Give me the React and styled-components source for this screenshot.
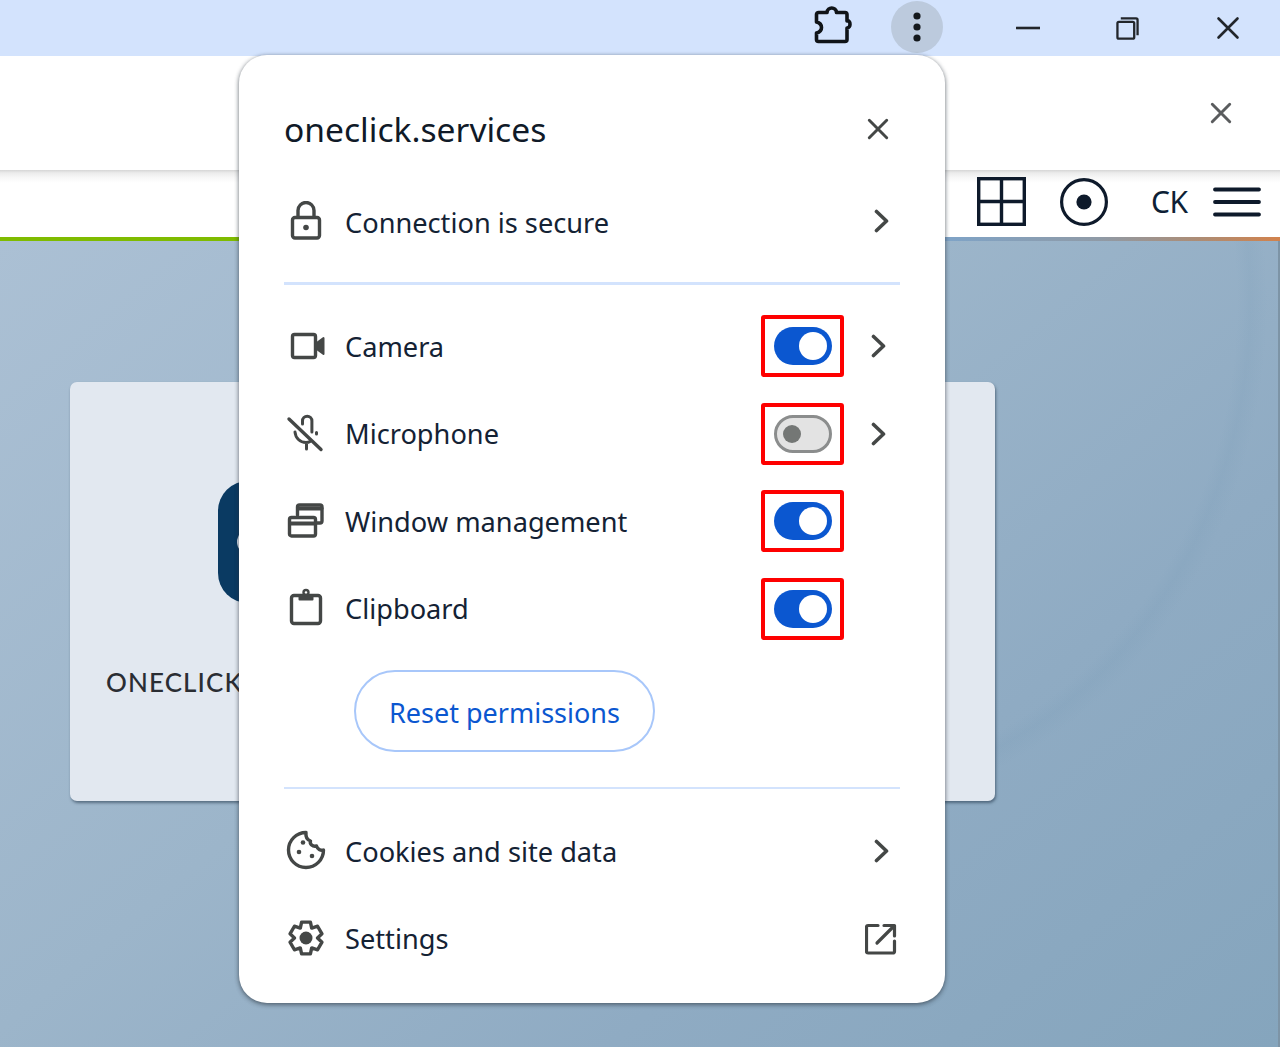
import React from "react";
import styled, { createGlobalStyle } from "styled-components";

const Global = createGlobalStyle`
  html, body { margin: 0; padding: 0; }
  body { font-family: "Noto Sans", "Open Sans", sans-serif; background: #8fabc3; overflow: hidden; }
  * { box-sizing: border-box; }
`;

const Page = styled.div`
  position: relative;
  width: 1280px;
  height: 1047px;
  overflow: hidden;
  display: flex;
  flex-direction: column;
`;

const TitleBar = styled.header`
  height: 56px;
  background: #d3e3fd;
  display: flex;
  align-items: flex-start;
  padding: 1px 2px 0 806px;
`;
const Extension = styled.div`
  width: 52px;
  height: 52px;
  padding: 0 0 4px 1px;
  display: flex;
  align-items: center;
  justify-content: center;
  margin-right: 33px;
`;
const MenuButton = styled.div`
  width: 52px;
  height: 52px;
  border-radius: 50%;
  background: #bccadd;
  display: flex;
  align-items: center;
  justify-content: center;
  margin-right: 35px;
`;
const WinButton = styled.div`
  width: 100px;
  height: 54px;
  display: flex;
  align-items: center;
  justify-content: center;
`;
const RestoreSlot = styled(WinButton)`
  padding-right: 2px;
`;

const TabBar = styled.div`
  height: 114px;
  background: #fff;
  display: flex;
  align-items: flex-end;
  justify-content: flex-end;
  padding: 0 48px 46px 0;
`;
const Toolbar = styled.div`
  height: 67px;
  background: linear-gradient(#d6d6d6 0, #ececec 3px, #f8f8f8 8px, #fff 13px);
  display: flex;
  align-items: center;
  justify-content: flex-end;
  padding: 0 19px 4px 0;
`;
const ToolSlot = styled.div`
  display: flex;
  align-items: center;
  margin-left: ${(p) => p.$gap}px;
`;
const Initials = styled.span`
  font-size: 30px;
  line-height: 34px;
  color: #0e1f36;
  width: 38px;
  white-space: nowrap;
  letter-spacing: -0.5px;
`;
const Progress = styled.div`
  height: 4px;
  background: linear-gradient(90deg, #7fbb00 0 240px, #7fa3c6 950px, #8f9aa6 1100px, #ad8c74 1200px, #d2824c 1280px);
`;

const Content = styled.main`
  flex: 1;
  padding: 141px 0 0 70px;
  border-right: 2px solid #7d94a6;
  background:
    radial-gradient(ellipse 430px 490px at 820px 60px, transparent 97%, rgba(100, 140, 170, 0.09) 100%, transparent 104%),
    linear-gradient(140deg, #abc0d4 0%, #9cb5ca 42%, #8fabc3 70%, #85a5bd 100%);
`;
const Card = styled.section`
  position: relative;
  width: 925px;
  height: 419px;
  background: #e2e8f0;
  border-radius: 7px;
  box-shadow: 1px 2px 3px rgba(30, 50, 70, 0.55);
  padding: 99px 0 0 36px;
  display: flex;
  flex-direction: column;
  align-items: flex-start;
`;
const Logo = styled.div`
  position: relative;
  width: 122px;
  height: 122px;
  margin-left: 112px;
  border-radius: 30px;
  background: #0a3a62;
  &::after {
    content: "";
    position: absolute;
    left: 19px;
    top: 49px;
    width: 24px;
    height: 24px;
    border-radius: 50%;
    background: #e2e8f0;
  }
`;
const CardName = styled.div`
  font-family: Lato, "Noto Sans", sans-serif;
  font-size: 26px;
  line-height: 32px;
  margin-top: 63px;
  letter-spacing: 1.1px;
  color: #2a2d33;
  font-weight: 500;
`;

const Popup = styled.aside`
  position: absolute;
  left: 239px;
  top: 55px;
  width: 706px;
  height: 948px;
  background: #fff;
  border-radius: 28px;
  box-shadow: 0 1px 4px rgba(40, 50, 60, 0.55), 0 2px 5px rgba(40, 50, 60, 0.25);
  padding: 0 45px;
  display: flex;
  flex-direction: column;
`;
const Header = styled.div`
  height: 124px;
  padding-top: 24px;
  display: flex;
  align-items: center;
  justify-content: space-between;
`;
const Title = styled.h1`
  margin: 0;
  font-size: 33.6px;
  font-weight: 400;
  color: #101a28;
`;
const CloseSlot = styled.div`
  width: 44px;
  display: flex;
  justify-content: center;
`;
const Row = styled.div`
  height: 87.5px;
  display: flex;
  align-items: center;
`;
const IconBox = styled.div`
  width: 44px;
  height: 44px;
  flex: none;
  margin-right: 17px;
`;
const Label = styled.span`
  flex: 1;
  font-size: 27.2px;
  color: #142234;
  white-space: nowrap;
`;
const Divider = styled.hr`
  margin: ${(p) => p.$top}px 0 ${(p) => p.$bottom}px;
  border: 0;
  height: ${(p) => p.$h}px;
  background: #d3e3fd;
`;
const Marked = styled.div`
  width: 83px;
  height: 62px;
  border: 4px solid #fe0000;
  border-radius: 3px;
  display: flex;
  align-items: center;
  justify-content: center;
  margin-right: 12px;
`;
const Toggle = styled.div`
  width: 58px;
  height: 38px;
  border-radius: 19px;
  background: ${(p) => (p.$on ? "#0b57d0" : "#e3e3e3")};
  border: ${(p) => (p.$on ? "0" : "3px solid #8b8d8d")};
  display: flex;
  align-items: center;
  justify-content: ${(p) => (p.$on ? "flex-end" : "flex-start")};
  padding: ${(p) => (p.$on ? "0 5px" : "0 6px")};
`;
const Thumb = styled.span`
  display: block;
  width: ${(p) => (p.$on ? 28 : 18)}px;
  height: ${(p) => (p.$on ? 28 : 18)}px;
  border-radius: 50%;
  background: ${(p) => (p.$on ? "#fff" : "#747775")};
`;
const Trailing = styled.div`
  width: 44px;
  flex: none;
  display: flex;
  justify-content: center;
  padding-left: ${(p) => (p.$shift ? 6 : 0)}px;
  padding-bottom: ${(p) => p.$lift || 0}px;
`;
const ResetButton = styled.button`
  align-self: flex-start;
  margin: 17px 0 0 70px;
  width: 301px;
  height: 82px;
  border-radius: 41px;
  border: 2px solid #a8c7fa;
  background: #fff;
  color: #0b57d0;
  font-family: inherit;
  font-size: 27px;
  padding: 4px 0 0;
`;

const ink = "#444746";

const Chevron = () => (
  <svg width="15" height="24" viewBox="0 0 15 24" fill="none" stroke={ink} strokeWidth="3.6" strokeLinecap="round" strokeLinejoin="round">
    <path d="M2.5 2.5 L12.5 12 L2.5 21.5" />
  </svg>
);
const Cross = ({ size = 24, color = ink, weight = 3.2 }) => (
  <svg width={size} height={size} viewBox="0 0 24 24" fill="none" stroke={color} strokeWidth={weight} strokeLinecap="round">
    <path d="M2.5 2.5 L21.5 21.5 M21.5 2.5 L2.5 21.5" />
  </svg>
);
const Glyph = ({ children, ...rest }) => (
  <svg width="44" height="44" viewBox="0 0 44 44" fill="none" stroke={ink} strokeWidth="3.4" strokeLinecap="round" strokeLinejoin="round" {...rest}>
    {children}
  </svg>
);

const gearPath = (() => {
  const pts = [];
  const teeth = 6;
  for (let i = 0; i < teeth; i++) {
    const a = (i / teeth) * Math.PI * 2 - Math.PI / 2;
    const w = 0.27;
    const gapR = 11.5;
    const toothR = 16.5;
    pts.push([a - 0.52, gapR], [a - w, toothR], [a + w, toothR], [a + 0.52, gapR]);
  }
  return (
    pts
      .map(([a, r], i) => `${i ? "L" : "M"}${(22 + r * Math.cos(a)).toFixed(2)} ${(21 + r * Math.sin(a)).toFixed(2)}`)
      .join(" ") + " Z"
  );
})();

const LockIcon = () => (
  <Glyph>
    <rect x="8.5" y="16.5" width="27" height="20.5" rx="2.5" />
    <path d="M14 16 V9.5 a8 8 0 0 1 16 0 V16" />
    <circle cx="22" cy="26.5" r="2.8" fill={ink} stroke="none" />
  </Glyph>
);
const CameraIcon = () => (
  <Glyph>
    <rect x="8.5" y="10.5" width="23" height="23" rx="2" />
    <path d="M32 19.5 L39.5 14 V30 L32 24.5 Z" fill={ink} strokeWidth="2" />
  </Glyph>
);
const MicOffIcon = () => (
  <Glyph>
    <path d="M5 7 L37 37.5" />
    <path d="M18.5 12 V9 a4.7 4.7 0 0 1 9.4 0 V20" strokeWidth="3" />
    <path d="M11 20 c.5 6 5 10.5 11 10.5 c1.5 0 3 -.3 4 -1 M32.5 22 V20.5 M22.5 31 V37" strokeWidth="3" />
  </Glyph>
);
const WindowsIcon = () => (
  <Glyph>
    <rect x="5.5" y="18.5" width="26" height="18.5" rx="2" />
    <path d="M6 24.5 H31" strokeWidth="4" />
    <path d="M13.5 16 V8 a2 2 0 0 1 2 -2 H36 a2 2 0 0 1 2 2 V22 a2 2 0 0 1 -2 2 H33" />
    <path d="M14 9.5 H37.5" strokeWidth="4" />
  </Glyph>
);
const ClipboardIcon = () => (
  <Glyph>
    <rect x="7.5" y="8.5" width="29" height="28" rx="2.5" />
    <path d="M15.5 9 H28.5 V12.5 H15.5 Z" fill={ink} strokeWidth="2" />
    <circle cx="22" cy="5.5" r="2.5" strokeWidth="2.4" />
  </Glyph>
);
const CookieIcon = () => (
  <Glyph>
    <path d="M22 3.5 A17.5 17.5 0 1 0 39.5 21 C36.5 22 33.5 20 32.5 17 C28.5 18 25.5 15 26.5 12 C23.5 11 21.5 8 22 3.5 Z" />
    <circle cx="19" cy="13.5" r="2.3" fill={ink} stroke="none" />
    <circle cx="15" cy="23" r="2.3" fill={ink} stroke="none" />
    <circle cx="28" cy="27" r="2.3" fill={ink} stroke="none" />
  </Glyph>
);
const GearIcon = () => (
  <Glyph>
    <path d={gearPath} strokeWidth="3.4" />
    <circle cx="22" cy="21" r="6.5" fill={ink} stroke="none" />
  </Glyph>
);
const ExternalIcon = () => (
  <svg width="32" height="32" viewBox="0 0 32 32" fill="none" stroke={ink} strokeWidth="3.2" strokeLinecap="round" strokeLinejoin="round">
    <path d="M13 2.5 H3 a1.5 1.5 0 0 0 -1.5 1.5 V28.5 a1.5 1.5 0 0 0 1.5 1.5 H28 a1.5 1.5 0 0 0 1.5 -1.5 V18" />
    <path d="M19 2.5 H29.5 V13 M29 3 L12 20" />
  </svg>
);

const PuzzleIcon = () => (
  <svg width="38" height="38" viewBox="0 0 38 38" fill="none" stroke="#101418" strokeWidth="3.6" strokeLinejoin="round">
    <path d="M2.5 8.5 a2 2 0 0 1 2 -2 H13 c.5 -6 9 -6 9.5 0 H31 a2 2 0 0 1 2 2 V15 c4 -1 4 7 0 7 V33.5 a2 2 0 0 1 -2 2 H4.5 a2 2 0 0 1 -2 -2 V27 c4 -1 5 -3 5 -5.5 s-1 -4.5 -5 -5.5 Z" />
  </svg>
);
const KebabIcon = () => (
  <svg width="10" height="32" viewBox="0 0 10 32" fill="#14181c">
    <circle cx="5" cy="5" r="3.6" />
    <circle cx="5" cy="16" r="3.6" />
    <circle cx="5" cy="27" r="3.6" />
  </svg>
);
const MinimizeIcon = () => (
  <svg width="24" height="6" viewBox="0 0 24 6">
    <path d="M0 3 H24" stroke="#22262b" strokeWidth="2.6" />
  </svg>
);
const RestoreIcon = () => (
  <svg width="23" height="23" viewBox="0 0 24 24" fill="none" stroke="#22262b" strokeWidth="2.4">
    <rect x="1.5" y="5" width="17.5" height="17.5" rx="1.5" />
    <path d="M5 1.5 H21 a1.5 1.5 0 0 1 1.5 1.5 V19" />
  </svg>
);
const GridIcon = () => (
  <svg width="49" height="49" viewBox="0 0 49 49" fill="none" stroke="#0e1a2b" strokeWidth="3.4">
    <rect x="1.7" y="1.7" width="45.6" height="45.6" />
    <path d="M24.5 2 V47 M2 24.5 H47" />
  </svg>
);
const TargetIcon = () => (
  <svg width="48" height="48" viewBox="0 0 48 48" fill="none" stroke="#0e1a2b" strokeWidth="3.2">
    <circle cx="24" cy="24" r="22.4" />
    <circle cx="24" cy="24" r="7.6" fill="#0e1a2b" stroke="none" />
  </svg>
);
const MenuLines = () => (
  <svg width="48" height="30" viewBox="0 0 48 30" stroke="#0e1a2b" strokeWidth="3.8" strokeLinecap="round">
    <path d="M2 2.5 H46 M2 15 H46 M2 27.5 H46" />
  </svg>
);

const sitePermissions = [
  { icon: CameraIcon, label: "Camera", on: true, more: true },
  { icon: MicOffIcon, label: "Microphone", on: false, more: true },
  { icon: WindowsIcon, label: "Window management", on: true },
  { icon: ClipboardIcon, label: "Clipboard", on: true },
];

export default function App() {
  return (
    <Page>
      <Global />
      <TitleBar>
        <Extension><PuzzleIcon /></Extension>
        <MenuButton><KebabIcon /></MenuButton>
        <WinButton><MinimizeIcon /></WinButton>
        <RestoreSlot><RestoreIcon /></RestoreSlot>
        <WinButton><Cross size={24} color="#22262b" weight={2.6} /></WinButton>
      </TitleBar>
      <TabBar><Cross size={22} color="#5a5c5e" /></TabBar>
      <Toolbar>
        <ToolSlot $gap={0}><GridIcon /></ToolSlot>
        <ToolSlot $gap={34}><TargetIcon /></ToolSlot>
        <ToolSlot $gap={43}><Initials>CK</Initials></ToolSlot>
        <ToolSlot $gap={24}><MenuLines /></ToolSlot>
      </Toolbar>
      <Progress />
      <Content>
        <Card>
          <Logo />
          <CardName>ONECLICK</CardName>
        </Card>
      </Content>
      <Popup>
        <Header>
          <Title>oneclick.services</Title>
          <CloseSlot><Cross size={22} /></CloseSlot>
        </Header>
        <Row>
          <IconBox><LockIcon /></IconBox>
          <Label>Connection is secure</Label>
          <Trailing $shift $lift={4}><Chevron /></Trailing>
        </Row>
        <Divider $top={15} $bottom={18} $h={3} />
        {sitePermissions.map(({ icon: Icon, label, on, more }) => (
          <Row key={label}>
            <IconBox><Icon /></IconBox>
            <Label>{label}</Label>
            <Marked><Toggle $on={on}><Thumb $on={on} /></Toggle></Marked>
            <Trailing>{more && <Chevron />}</Trailing>
          </Row>
        ))}
        <ResetButton>Reset permissions</ResetButton>
        <Divider $top={35} $bottom={19} $h={2} />
        <Row>
          <IconBox><CookieIcon /></IconBox>
          <Label>Cookies and site data</Label>
          <Trailing $shift><Chevron /></Trailing>
        </Row>
        <Row>
          <IconBox><GearIcon /></IconBox>
          <Label>Settings</Label>
          <Trailing $shift><ExternalIcon /></Trailing>
        </Row>
      </Popup>
    </Page>
  );
}
